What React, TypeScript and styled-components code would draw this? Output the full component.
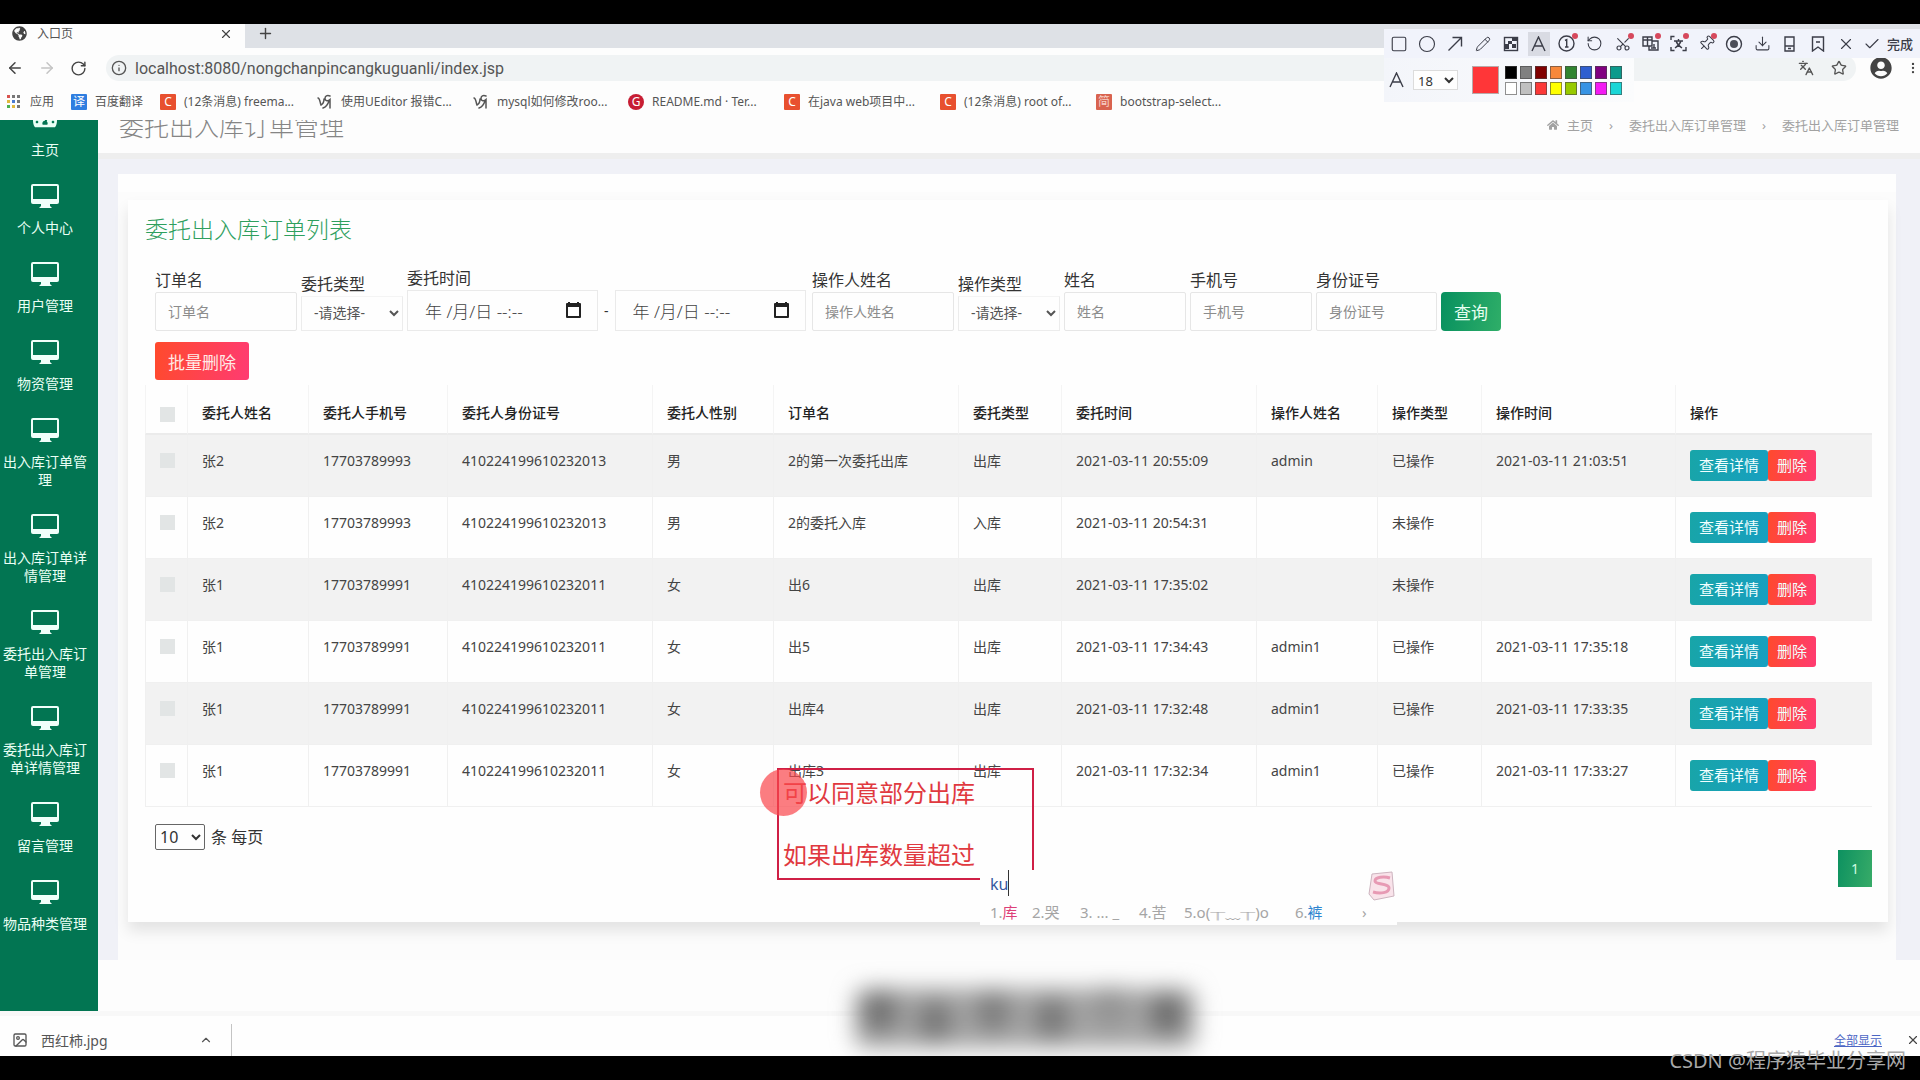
import React from "react";
import styled, { createGlobalStyle } from "styled-components";
import {
  ArrowLeft, ArrowRight, RotateCw, RotateCcw, Info, X, Plus, Square, Circle, Pencil,
  Scissors, Languages, Pin, Download, Check, Star, ChevronUp,
  MoreVertical, Image as ImageIcon,
} from "lucide-react";
import { FaHome, FaGlobeAmericas, FaUserCircle, FaTachometerAlt } from "react-icons/fa";

const GlobalStyle = createGlobalStyle`
  * { box-sizing: border-box; }
  body { margin: 0; background: #000; font-family: "Noto Sans", "Noto Sans CJK SC", sans-serif; font-size: 14px; color: #333; }
  button, input, select { font-family: inherit; }
  button { cursor: pointer; }
`;

const Screen = styled.div`
  position: relative;
  display: flex;
  flex-direction: column;
  min-height: 100vh;
  padding: 24px 0;
  overflow: hidden;
`;

/* ---------- browser chrome ---------- */
const TabStrip = styled.div`
  display: flex;
  height: 24px;
  background: #dee1e6;
`;
const Tab = styled.div`
  display: flex;
  align-items: center;
  gap: 10px;
  width: 245px;
  height: 24px;
  padding: 0 12px 5px;
  background: #fdfdfd;
  font-size: 12px;
  line-height: 18px;
  color: #555;
  svg { color: #444; }
`;
const PlainButton = styled.button`
  display: flex;
  align-items: center;
  justify-content: center;
  padding: 0;
  border: 0;
  background: none;
  color: ${(p) => p.color || "#444"};
`;
const TabClose = styled(PlainButton)`
  margin-left: auto;
`;
const NewTab = styled(PlainButton)`
  height: 19px;
  margin-left: 12px;
`;
const AddressRow = styled.div`
  display: flex;
  align-items: center;
  gap: 14px;
  height: 40px;
  padding-left: 6px;
  background: #fdfdfd;
`;
const Omnibox = styled.label`
  display: flex;
  flex: 1;
  align-items: center;
  gap: 8px;
  height: 26px;
  padding: 0 9px 0 5px;
  margin-left: 5px;
  border-radius: 13px;
  background: #f0f3f4;
  color: #555;
`;
const OmniActions = styled.span`
  display: flex;
  gap: 17px;
`;
const UrlInput = styled.input`
  flex: 1;
  min-width: 0;
  padding: 0;
  border: 0;
  outline: 0;
  background: none;
  font-family: Roboto, "Noto Sans", sans-serif;
  font-size: 16px;
  color: #555;
`;
const BookmarkBar = styled.nav`
  display: flex;
  align-items: center;
  height: 32px;
  padding: 0 6px 5px;
  background: #fdfdfd;
`;
const BookmarkLink = styled.a<{ $w: number }>`
  display: flex;
  align-items: center;
  gap: 8px;
  width: ${(p) => p.$w}px;
  font-size: 12px;
  line-height: 18px;
  color: #555;
  text-decoration: none;
  white-space: nowrap;
`;
const Favicon = styled.span<{ $bg: string; $round?: boolean; $fg?: string }>`
  display: inline-flex;
  align-items: center;
  justify-content: center;
  width: 16px;
  height: 16px;
  border-radius: ${(p) => (p.$round ? "8px" : "1px")};
  background: ${(p) => p.$bg};
  color: ${(p) => p.$fg || "#fff"};
  font-size: 12px;
  line-height: 16px;
`;

/* ---------- web page ---------- */
const Page = styled.div`
  display: flex;
  flex: 1;
  height: 0;
  overflow: hidden;
  background: #fdfdfd;
  border-bottom: 5px solid #f8f8f8;
`;
const Sidebar = styled.aside`
  width: 98px;
  flex: none;
  overflow: hidden;
  background: #027552;
  padding-right: 8px;
`;
const Menu = styled.ul`
  list-style: none;
  margin: -26px 0 0;
  padding: 0;
`;
const MenuLink = styled.a`
  display: flex;
  flex-direction: column;
  align-items: center;
  gap: 11px;
  padding: 12px 3px 13px;
  color: #eafff5;
  font-size: 14px;
  line-height: 18px;
  text-align: center;
  text-decoration: none;
  word-break: break-all;
  svg { display: block; }
`;
const Main = styled.main`
  flex: 1;
  min-width: 0;
`;
const PageHeader = styled.header`
  display: flex;
  justify-content: space-between;
  height: 33px;
  padding: 0 21px;
`;
const PageTitle = styled.h1`
  margin: -12px 0 0;
  font-size: 25px;
  line-height: 36px;
  font-weight: 300;
  color: #858585;
`;
const Crumbs = styled.nav`
  display: flex;
  align-items: center;
  gap: 16px;
  height: 10px;
  font-size: 13px;
  line-height: 10px;
  color: #a2a2a2;
  a { display: flex; align-items: center; gap: 8px; color: inherit; text-decoration: none; }
`;
const ContentArea = styled.div`
  padding: 15px 24px 0 20px;
  border-top: 6px solid #eeeeee;
  background: #f0f1f7;
`;
const Sheet = styled.div`
  height: 786px;
  padding: 26px 8px 0 10px;
  background: #fcfcfc;
  box-shadow: inset 0 18px 0 #fefefe;
`;
const Card = styled.section`
  height: 722px;
  padding: 12px 16px 0 17px;
  background: #fefefe;
  box-shadow: 0 9px 14px rgba(0, 0, 0, 0.1);
`;
const CardTitle = styled.h2`
  margin: 0;
  font-size: 23px;
  line-height: 34px;
  font-weight: 300;
  color: #2e9f5e;
`;
const Filters = styled.form`
  display: flex;
  align-items: flex-end;
  gap: 4px;
  height: 85px;
  padding-left: 10px;
`;
const Field = styled.div<{ $w: number }>`
  display: flex;
  flex-direction: column;
  width: ${(p) => p.$w}px;
`;
const Label = styled.label`
  font-size: 16px;
  line-height: 24px;
  color: #333;
`;
const TextInput = styled.input`
  width: 100%;
  height: 39px;
  padding: 0 12px;
  border: 1px solid #e6e6e6;
  border-radius: 2px;
  background: #fefefe;
  font-size: 14px;
  color: #555;
  outline: 0;
  &::placeholder { color: #8c8c8c; }
`;
const FilterSelect = styled.select`
  width: 100%;
  height: 35px;
  padding: 0 0 2px 8px;
  border: 1px solid #ececec;
  border-top-color: #f4f4f4;
  background: #fefefe;
  font-size: 14px;
  color: #555;
`;
const DateRow = styled.div`
  display: flex;
  align-items: center;
  gap: 6px;
`;
const DateBox = styled.span`
  display: flex;
  align-items: center;
  width: 191px;
  height: 41px;
  padding: 0 15px 0 17px;
  border: 1px solid #eaeaea;
`;
const DateInput = styled.input`
  flex: 1;
  min-width: 0;
  padding: 0;
  border: 0;
  outline: 0;
  background: none;
  font-size: 17px;
  font-weight: 300;
  color: #444;
`;
const GreenButton = styled.button`
  height: 39px;
  padding: 0 13px;
  border: 0;
  border-radius: 4px;
  background: linear-gradient(100deg, #07905f, #2fae68);
  color: #e8fff2;
  font-size: 17px;
`;
const BulkDelete = styled.button`
  display: block;
  margin: 11px 0 5px 10px;
  height: 38px;
  padding: 0 13px;
  border: 0;
  border-radius: 3px;
  background: linear-gradient(100deg, #ff4a2c, #ff3b72);
  color: #ffeae6;
  font-size: 17px;
`;
const Table = styled.table`
  width: 100%;
  table-layout: fixed;
  border-collapse: separate;
  border-spacing: 0;
`;
const Th = styled.th`
  height: 50px;
  padding: 17px 0 10px 14px;
  border-left: 1px solid #f4f4f4;
  border-bottom: 2px solid #ebebeb;
  text-align: left;
  font-size: 14px;
  line-height: 21px;
  font-weight: 500;
  color: #222;
  white-space: nowrap;
`;
const Tr = styled.tr`
  &:nth-child(odd) { background: #f2f2f2; }
`;
const Td = styled.td`
  height: 62px;
  padding: 15px 0 15px 14px;
  border-left: 1px solid #f0f0f0;
  border-bottom: 1px solid #f0f0f0;
  vertical-align: top;
  font-size: 14px;
  line-height: 21px;
  color: #444;
  white-space: nowrap;
`;
const Tick = styled.input`
  appearance: none;
  display: block;
  width: 15px;
  height: 15px;
  margin: 3px 0 0;
  background: #e2e5e5;
`;
const Actions = styled.div`
  display: flex;
`;
const RowButton = styled.button<{ $danger?: boolean }>`
  height: 31px;
  padding: 0 9px;
  border: 0;
  border-radius: 3px;
  background: ${(p) => (p.$danger ? "linear-gradient(100deg, #ff4a2c, #ff3b72)" : "linear-gradient(100deg, #18a5a8, #179fc0)")};
  color: #f2ffff;
  font-size: 15px;
  line-height: 21px;
`;
const Footer = styled.div`
  display: flex;
  justify-content: space-between;
  padding: 17px 0 0 10px;
`;
const PageSize = styled.label`
  display: flex;
  gap: 6px;
  font-size: 16px;
  line-height: 26px;
  height: 26px;
  select {
    width: 50px;
    height: 26px;
    padding: 0;
    border: 1px solid #666;
    border-radius: 2px;
    background: #fefefe;
    font-size: 16px;
    color: #333;
  }
`;
const PageNumber = styled.button`
  width: 34px;
  height: 37px;
  margin-top: 26px;
  border: 0;
  background: linear-gradient(100deg, #0d9160, #37ab68);
  color: #cffbe2;
  font-size: 14px;
`;

/* ---------- download shelf ---------- */
const Shelf = styled.footer`
  display: flex;
  align-items: center;
  height: 40px;
  padding-top: 8px;
  background: #fefefe;
  color: #555;
`;
const ShelfItem = styled.div`
  display: flex;
  align-items: center;
  gap: 13px;
  width: 232px;
  height: 32px;
  padding: 0 18px 0 12px;
  border-right: 1px solid #c4c4c4;
  font-size: 14px;
  svg:last-child { margin-left: auto; }
`;
const ShowAll = styled.a`
  margin-left: auto;
  margin-right: 24px;
  font-size: 12px;
  color: #4c66c4;
`;

/* ---------- screenshot tool overlay ---------- */
const Snip = styled.div`
  position: absolute;
  top: 29px;
  right: 0;
  width: 536px;
`;
const SnipTools = styled.div`
  display: flex;
  align-items: center;
  justify-content: space-between;
  height: 29px;
  padding: 0 7px 0 4px;
  background: #f1f3fb;
`;
const ToolButton = styled.button<{ $on?: boolean; $dot?: boolean }>`
  position: relative;
  display: flex;
  align-items: center;
  justify-content: center;
  gap: 6px;
  height: 24px;
  min-width: 22px;
  padding: 0;
  border: 0;
  background: ${(p) => (p.$on ? "#d9dbe3" : "none")};
  color: #3b3d48;
  font-size: 13px;
  font-weight: 500;
  &::after {
    content: "";
    display: ${(p) => (p.$dot ? "block" : "none")};
    position: absolute;
    top: 1px;
    right: 0;
    width: 6px;
    height: 6px;
    border-radius: 3px;
    background: #d6485c;
  }
`;
const SnipOptions = styled.div`
  display: flex;
  align-items: center;
  width: 250px;
  height: 44px;
  padding-left: 4px;
  background: linear-gradient(90deg, #f3f5fa, #fbfcfd);
`;
const SizeSelect = styled.select`
  width: 45px;
  height: 20px;
  margin: 0 14px 0 8px;
  padding: 0;
  border: 1px solid #dcdcdc;
  background: #fefefe;
  font-size: 13px;
  color: #333;
`;
const CurrentColour = styled.span`
  width: 27px;
  height: 28px;
  margin-right: 6px;
  border: 1px solid #b9a9a9;
  background: #ff3638;
`;
const Palette = styled.div`
  display: grid;
  grid-template-columns: repeat(8, 12px);
  gap: 3px;
`;
const Swatch = styled.button`
  width: 12px;
  height: 13px;
  padding: 0;
  border: 1px solid rgba(70, 70, 70, 0.6);
  background: ${(p) => p.color};
`;

/* ---------- floating annotation, input method and captions ---------- */
const Note = styled.div`
  position: absolute;
  left: 777px;
  top: 768px;
  width: 257px;
  height: 112px;
  padding: 7px 4px;
  border: 2px solid #cf1f45;
  font-size: 24px;
  line-height: 31px;
  color: #e0393f;
  white-space: pre-line;
`;
const Pointer = styled.div`
  position: absolute;
  left: 760px;
  top: 769px;
  width: 47px;
  height: 47px;
  border-radius: 50%;
  background: rgba(250, 70, 75, 0.7);
`;
const Ime = styled.div`
  position: absolute;
  left: 980px;
  top: 870px;
  width: 417px;
  height: 55px;
  padding: 0 0 0 10px;
  background: #fefefe;
`;
const ImeTyped = styled.div`
  display: flex;
  justify-content: space-between;
  height: 30px;
  font-size: 16px;
  line-height: 28px;
  color: #3558a0;
  span { height: 26px; border-right: 1px solid #333; }
`;
const ImeList = styled.div`
  display: grid;
  grid-template-columns: 42px 48px 59px 45px 111px 67px auto;
  font-size: 15px;
  line-height: 24px;
  color: #a5a5a5;
  white-space: nowrap;
  b { font-weight: 400; color: #dd3f78; }
  em { font-style: normal; color: #2f86d0; }
`;
const Smudge = styled.svg`
  position: absolute;
  left: 810px;
  top: 950px;
`;
const Credit = styled.div`
  position: absolute;
  right: 14px;
  bottom: 4px;
  font-size: 20px;
  line-height: 30px;
  color: #a9a9a9;
`;

const Monitor = () => (
  <svg width="28" height="24" viewBox="0 0 28 24" aria-hidden="true">
    <path fill="#f0fffa" fillRule="evenodd" d="M2 0h24a2 2 0 0 1 2 2v16a2 2 0 0 1-2 2h-7v2l2 2H8l2-2v-2H2a2 2 0 0 1-2-2V2a2 2 0 0 1 2-2zm0 2v13h24V2z" />
  </svg>
);
const CalendarIcon = () => (
  <svg width="17" height="17" viewBox="0 0 17 17" aria-hidden="true">
    <path fill="#222" fillRule="evenodd" d="M2 1h13a1 1 0 0 1 1 1v13a1 1 0 0 1-1 1H2a1 1 0 0 1-1-1V2a1 1 0 0 1 1-1zm1 4v9h11V5z" />
    <path fill="#222" d="M3 0h2v2H3zM12 0h2v2h-2z" />
  </svg>
);
const AppsIcon = () => (
  <svg width="16" height="16" viewBox="0 0 16 16" aria-hidden="true">
    {["#d9534f", "#777", "#777", "#e0b83c", "#4a7bd0", "#777", "#4caf50", "#e0b83c", "#777"].map((c, i) => (
      <rect key={i} x={1 + (i % 3) * 5} y={1 + Math.floor(i / 3) * 5} width="3" height="3" fill={c} />
    ))}
  </svg>
);
const KnotIcon = () => (
  <svg width="16" height="16" viewBox="0 0 16 16" fill="none" stroke="#555" strokeWidth="1.5" strokeLinecap="round" aria-hidden="true">
    <path d="M1 4c2 0 2 5 3 7 2-1 3-4 3-6M13 2c-3-1-5 0-5 2.500s3 3 5 1V14M12 7c-1 3-3 6-6 7" />
  </svg>
);
const ArrowIcon = () => (
  <svg width="16" height="16" viewBox="0 0 16 16" fill="none" stroke="#3b3d48" strokeWidth="1.4" aria-hidden="true">
    <path d="M1.500 14.500 14 2M5.500 1.500H14.500V10.500" />
  </svg>
);
const MosaicIcon = () => (
  <svg width="16" height="16" viewBox="0 0 16 16" aria-hidden="true">
    <rect x="1.500" y="1.500" width="13" height="13" fill="none" stroke="#3b3d48" strokeWidth="1.4" />
    <path fill="#3b3d48" d="M2 8h4v5H2zM5 5h4v3H5zM9 2h5v3H9zM9 8h4v4H9z" />
  </svg>
);
const LetterA = () => (
  <svg width="17" height="16" viewBox="0 0 17 16" fill="none" stroke="#3b3d48" strokeWidth="1.4" aria-hidden="true">
    <path d="M2 15 8.500 1 15 15M4 10h9" />
  </svg>
);
const StepIcon = () => (
  <svg width="17" height="17" viewBox="0 0 17 17" fill="none" stroke="#3b3d48" strokeWidth="1.4" aria-hidden="true">
    <circle cx="8.500" cy="8.500" r="7.500" />
    <path d="M7 5.500 8.700 4.700V12M7 12h3.500" />
  </svg>
);
const OcrIcon = () => (
  <svg width="17" height="17" viewBox="0 0 17 17" fill="none" stroke="#3b3d48" strokeWidth="1.400" aria-hidden="true">
    <path d="M1 2h9v9H1zM1 5h9M5.500 2v9M10 6h6v9H7v-4M12 9v4M9 13h5" />
  </svg>
);
const TranslateIcon = () => (
  <svg width="17" height="17" viewBox="0 0 17 17" fill="none" stroke="#3b3d48" strokeWidth="1.4" aria-hidden="true">
    <path d="M1 5V1.500H4.500M1 12v3.500H4.500M16 12v3.500H12.500M4 6h9M8.500 4v2M11 6c-1 3-3 5-6 7M6 6c1 3 3 5 6 7" />
  </svg>
);
const RecordIcon = () => (
  <svg width="18" height="18" viewBox="0 0 18 18" aria-hidden="true">
    <circle cx="9" cy="9" r="7.500" fill="none" stroke="#3b3d48" strokeWidth="1.400" />
    <circle cx="9" cy="9" r="4" fill="#4b4d58" />
  </svg>
);
const PhoneIcon = () => (
  <svg width="14" height="16" viewBox="0 0 14 16" fill="none" stroke="#3b3d48" strokeWidth="1.400" aria-hidden="true">
    <path d="M2 1h9v14H2zM2 10h9M5 12.500h3" />
  </svg>
);
const SaveMarkIcon = () => (
  <svg width="14" height="16" viewBox="0 0 14 16" fill="none" stroke="#3b3d48" strokeWidth="1.400" aria-hidden="true">
    <path d="M1.500 1h11v14L7 11l-5.500 4zM5 6h4" />
  </svg>
);
const ImeLogo = () => (
  <svg width="34" height="32" viewBox="0 0 34 32" aria-hidden="true">
    <path d="M9 4l20-2 2 24-20 4-5-6z" fill="#f9e3ea" stroke="#cdb4bf" />
    <path d="M27 8c-6-2-15-1-15 3s14 2 14 7-9 6-16 4" fill="none" stroke="#e79ab4" strokeWidth="3" />
  </svg>
);

const menu = ["个人中心", "用户管理", "物资管理", "出入库订单管理", "出入库订单详情管理", "委托出入库订单管理", "委托出入库订单详情管理", "留言管理", "物品种类管理"];

const bookmarks: { w: number; icon: React.ReactNode; text: string }[] = [
  { w: 65, icon: <AppsIcon />, text: "应用" },
  { w: 89, icon: <Favicon $bg="#2f7ee0">译</Favicon>, text: "百度翻译" },
  { w: 157, icon: <Favicon $bg="#e8502f">C</Favicon>, text: "(12条消息) freema..." },
  { w: 156, icon: <KnotIcon />, text: "使用UEditor 报错C..." },
  { w: 155, icon: <KnotIcon />, text: "mysql如何修改roo..." },
  { w: 156, icon: <Favicon $bg="#c71d33" $round>G</Favicon>, text: "README.md · Ter..." },
  { w: 156, icon: <Favicon $bg="#e8502f">C</Favicon>, text: "在java web项目中..." },
  { w: 156, icon: <Favicon $bg="#e8502f">C</Favicon>, text: "(12条消息) root of..." },
  { w: 156, icon: <Favicon $bg="#d9634f" $fg="#f7cfc6">简</Favicon>, text: "bootstrap-select..." },
];

const columnWidths = [42, 121, 139, 205, 121, 185, 103, 195, 121, 104, 194];
const headings = ["委托人姓名", "委托人手机号", "委托人身份证号", "委托人性别", "订单名", "委托类型", "委托时间", "操作人姓名", "操作类型", "操作时间", "操作"];
const rows = [
  ["张2", "17703789993", "410224199610232013", "男", "2的第一次委托出库", "出库", "2021-03-11 20:55:09", "admin", "已操作", "2021-03-11 21:03:51"],
  ["张2", "17703789993", "410224199610232013", "男", "2的委托入库", "入库", "2021-03-11 20:54:31", "", "未操作", ""],
  ["张1", "17703789991", "410224199610232011", "女", "出6", "出库", "2021-03-11 17:35:02", "", "未操作", ""],
  ["张1", "17703789991", "410224199610232011", "女", "出5", "出库", "2021-03-11 17:34:43", "admin1", "已操作", "2021-03-11 17:35:18"],
  ["张1", "17703789991", "410224199610232011", "女", "出库4", "出库", "2021-03-11 17:32:48", "admin1", "已操作", "2021-03-11 17:33:35"],
  ["张1", "17703789991", "410224199610232011", "女", "出库3", "出库", "2021-03-11 17:32:34", "admin1", "已操作", "2021-03-11 17:33:27"],
];

const tools: { name: string; icon: React.ReactNode; on?: boolean; dot?: boolean }[] = [
  { name: "矩形", icon: <Square size={18} strokeWidth={1.5} /> },
  { name: "椭圆", icon: <Circle size={18} strokeWidth={1.5} /> },
  { name: "箭头", icon: <ArrowIcon /> },
  { name: "画笔", icon: <Pencil size={16} strokeWidth={1.5} /> },
  { name: "马赛克", icon: <MosaicIcon /> },
  { name: "文字", icon: <LetterA />, on: true },
  { name: "序号", icon: <StepIcon />, dot: true },
  { name: "撤销", icon: <RotateCcw size={17} strokeWidth={1.5} /> },
  { name: "长截图", icon: <Scissors size={16} strokeWidth={1.7} style={{ transform: "rotate(-90deg)" }} />, dot: true },
  { name: "识别", icon: <OcrIcon />, dot: true },
  { name: "翻译", icon: <TranslateIcon />, dot: true },
  { name: "钉住", icon: <Pin size={17} strokeWidth={1.5} style={{ transform: "rotate(45deg)" }} />, dot: true },
  { name: "录制", icon: <RecordIcon /> },
  { name: "保存", icon: <Download size={17} strokeWidth={1.5} /> },
  { name: "手机", icon: <PhoneIcon /> },
  { name: "收藏", icon: <SaveMarkIcon /> },
  { name: "关闭", icon: <X size={18} strokeWidth={1.5} /> },
];

const swatches = [
  "#000000", "#808080", "#800000", "#f7883a", "#308430", "#2f5fd0", "#800080", "#0c9a8c",
  "#ffffff", "#c0c0c0", "#fb3838", "#ffff00", "#98ca00", "#3894e4", "#f31bf3", "#1ad6d6",
];

const smudgeSpots = [
  { x: 70, y: 62, fill: "#757575" },
  { x: 125, y: 70, fill: "#7a7a7a" },
  { x: 183, y: 62, fill: "#808080" },
  { x: 242, y: 68, fill: "#7a7a7a" },
  { x: 300, y: 58, fill: "#949494" },
  { x: 357, y: 64, fill: "#707070" },
];

function TextField({ id, label, width }: { id: string; label: string; width: number }) {
  return (
    <Field $w={width}>
      <Label htmlFor={id}>{label}</Label>
      <TextInput id={id} placeholder={label} />
    </Field>
  );
}

function SelectField({ id, label }: { id: string; label: string }) {
  return (
    <Field $w={102}>
      <Label htmlFor={id}>{label}</Label>
      <FilterSelect id={id}><option>-请选择-</option></FilterSelect>
    </Field>
  );
}

export default function App() {
  return (
    <Screen>
      <GlobalStyle />
      <TabStrip>
        <Tab>
          <FaGlobeAmericas size={15} />入口页
          <TabClose aria-label="关闭标签页"><X size={14} /></TabClose>
        </Tab>
        <NewTab aria-label="新标签页"><Plus size={17} /></NewTab>
      </TabStrip>
      <AddressRow>
        <PlainButton aria-label="后退"><ArrowLeft size={18} /></PlainButton>
        <PlainButton aria-label="前进" color="#c4c4c4"><ArrowRight size={18} /></PlainButton>
        <PlainButton aria-label="重新加载"><RotateCw size={17} /></PlainButton>
        <Omnibox>
          <Info size={16} />
          <UrlInput aria-label="地址" defaultValue="localhost:8080/nongchanpincangkuguanli/index.jsp" />
          <OmniActions>
            <Languages size={16} />
            <Star size={16} />
          </OmniActions>
        </Omnibox>
        <PlainButton aria-label="用户"><FaUserCircle size={22} /></PlainButton>
        <PlainButton aria-label="菜单"><MoreVertical size={14} /></PlainButton>
      </AddressRow>
      <BookmarkBar>
        {bookmarks.map((b) => (
          <BookmarkLink key={b.text} href="#" $w={b.w}>{b.icon}{b.text}</BookmarkLink>
        ))}
      </BookmarkBar>

      <Page>
        <Sidebar>
          <Menu>
            <li><MenuLink href="#"><FaTachometerAlt size={24} />主页</MenuLink></li>
            {menu.map((m) => (
              <li key={m}><MenuLink href="#"><Monitor />{m}</MenuLink></li>
            ))}
          </Menu>
        </Sidebar>
        <Main>
          <PageHeader>
            <PageTitle>委托出入库订单管理</PageTitle>
            <Crumbs>
              <a href="#"><FaHome size={12} />主页</a><span>›</span>
              <a href="#">委托出入库订单管理</a><span>›</span>
              <a href="#">委托出入库订单管理</a>
            </Crumbs>
          </PageHeader>
          <ContentArea>
            <Sheet>
              <Card>
                <CardTitle>委托出入库订单列表</CardTitle>
                <Filters>
                  <TextField id="order" label="订单名" width={142} />
                  <SelectField id="type" label="委托类型" />
                  <Field $w={401}>
                    <Label htmlFor="from">委托时间</Label>
                    <DateRow>
                      <DateBox>
                        <DateInput id="from" defaultValue="年 /月/日 --:--" />
                        <PlainButton type="button" aria-label="选择开始时间"><CalendarIcon /></PlainButton>
                      </DateBox>
                      -
                      <DateBox>
                        <DateInput aria-label="结束时间" defaultValue="年 /月/日 --:--" />
                        <PlainButton type="button" aria-label="选择结束时间"><CalendarIcon /></PlainButton>
                      </DateBox>
                    </DateRow>
                  </Field>
                  <TextField id="operator" label="操作人姓名" width={142} />
                  <SelectField id="action" label="操作类型" />
                  <TextField id="name" label="姓名" width={122} />
                  <TextField id="phone" label="手机号" width={122} />
                  <TextField id="idcard" label="身份证号" width={121} />
                  <GreenButton type="button">查询</GreenButton>
                </Filters>
                <BulkDelete>批量删除</BulkDelete>
                <Table>
                  <colgroup>
                    {columnWidths.map((w, i) => <col key={i} width={w} />)}
                    <col />
                  </colgroup>
                  <thead>
                    <tr>
                      <Th><Tick type="checkbox" aria-label="全选" /></Th>
                      {headings.map((h) => <Th key={h}>{h}</Th>)}
                    </tr>
                  </thead>
                  <tbody>
                    {rows.map((r, i) => (
                      <Tr key={i}>
                        <Td><Tick type="checkbox" aria-label={`选择第${i + 1}行`} /></Td>
                        {r.map((c, j) => <Td key={j}>{c}</Td>)}
                        <Td>
                          <Actions>
                            <RowButton>查看详情</RowButton>
                            <RowButton $danger>删除</RowButton>
                          </Actions>
                        </Td>
                      </Tr>
                    ))}
                  </tbody>
                </Table>
                <Footer>
                  <PageSize>
                    <select><option>10</option></select>
                    条 每页
                  </PageSize>
                  <PageNumber>1</PageNumber>
                </Footer>
              </Card>
            </Sheet>
          </ContentArea>
        </Main>
      </Page>

      <Shelf>
        <ShelfItem><ImageIcon size={16} />西红柿.jpg<ChevronUp size={14} /></ShelfItem>
        <ShowAll href="#">全部显示</ShowAll>
        <PlainButton aria-label="关闭下载栏"><X size={14} /></PlainButton>
      </Shelf>

      <Snip>
        <SnipTools>
          {tools.map((t) => (
            <ToolButton key={t.name} aria-label={t.name} $on={t.on} $dot={t.dot}>{t.icon}</ToolButton>
          ))}
          <ToolButton><Check size={18} strokeWidth={1.5} />完成</ToolButton>
        </SnipTools>
        <SnipOptions>
          <LetterA />
          <SizeSelect aria-label="字号"><option>18</option></SizeSelect>
          <CurrentColour />
          <Palette>
            {swatches.map((c) => <Swatch key={c} color={c} aria-label={c} />)}
          </Palette>
        </SnipOptions>
      </Snip>

      <Note>{"可以同意部分出库\n\n如果出库数量超过"}</Note>
      <Pointer />
      <Ime>
        <ImeTyped><span>ku</span><ImeLogo /></ImeTyped>
        <ImeList>
          <span>1.<b>库</b></span><span>2.哭</span><span>3. ... _</span><span>4.苦</span>
          <span>5.o(╥﹏╥)o</span><span>6.<em>裤</em></span><span>›</span>
        </ImeList>
      </Ime>
      <Smudge width="430" height="106" viewBox="0 0 430 106" aria-hidden="true">
        <defs><filter id="soft" x="-20%" y="-50%" width="140%" height="200%"><feGaussianBlur stdDeviation="11" /></filter></defs>
        <g filter="url(#soft)">
          <rect x="44" y="38" width="342" height="60" rx="12" fill="#a6a6a6" />
          {smudgeSpots.map((s) => <ellipse key={s.x} cx={s.x} cy={s.y} rx="20" ry="22" fill={s.fill} />)}
        </g>
      </Smudge>
      <Credit>CSDN @程序猿毕业分享网</Credit>
    </Screen>
  );
}
